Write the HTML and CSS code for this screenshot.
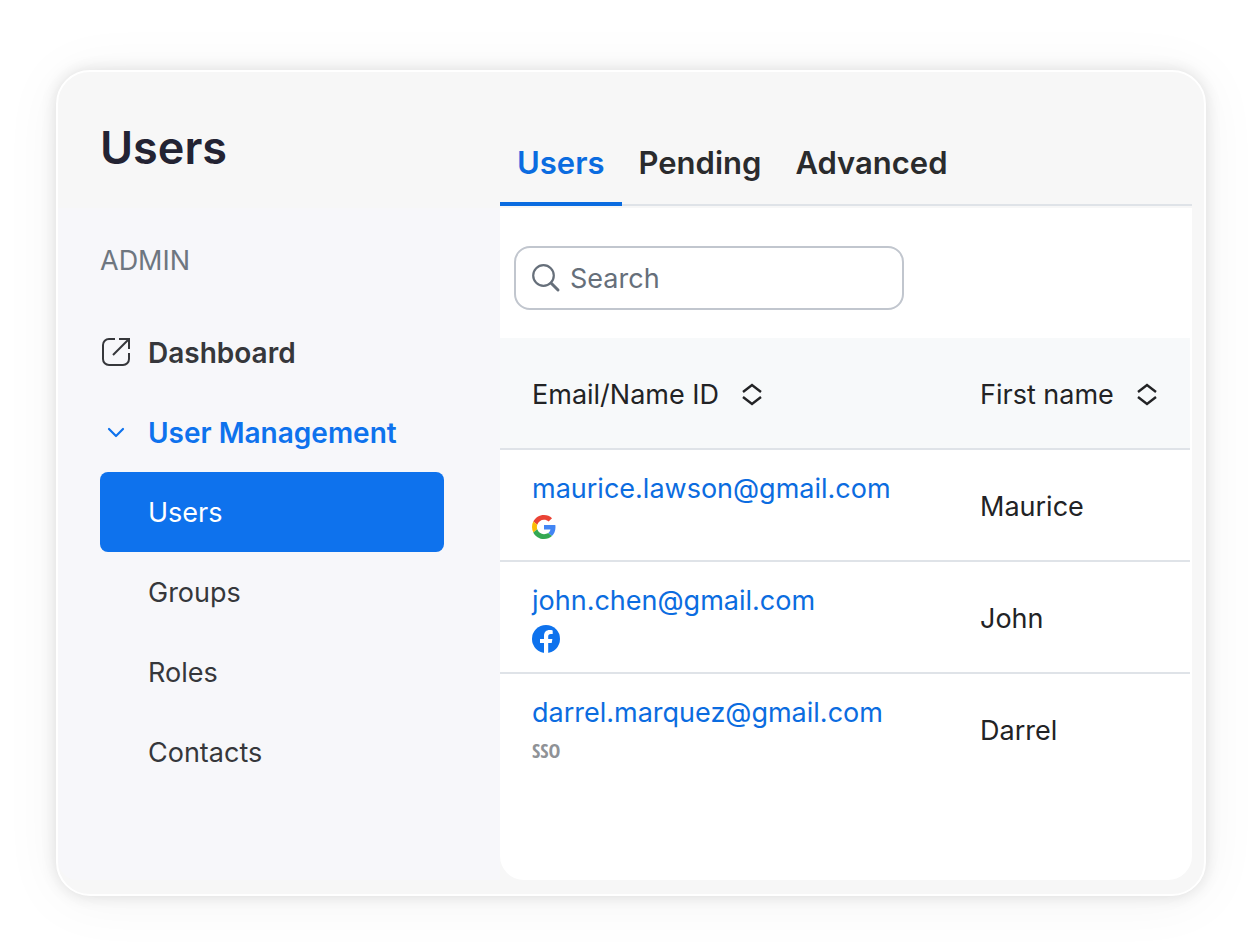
FILE: index.html
```html
<!DOCTYPE html>
<html lang="en">
<head>
  <meta charset="UTF-8">
  <meta name="viewport" content="width=device-width, initial-scale=1.0">
  <title>Users</title>
  <link rel="stylesheet" href="styles.css">
</head>
<body>
  <div class="card">
    <!-- Sidebar -->
    <aside class="sidebar">
      <h1>Users</h1>
      <nav class="nav">
        <h2>ADMIN</h2>
        <a class="nav-item strong" href="#">
          <svg width="32" height="32" viewBox="0 0 32 32" fill="none" stroke="currentColor" stroke-width="2">
            <path d="M15 3H9a6 6 0 0 0-6 6v14a6 6 0 0 0 6 6h14a6 6 0 0 0 6-6v-6M19 3h10v10M29 3L13 19"/>
          </svg>
          <span>Dashboard</span>
        </a>
        <a class="nav-item strong open" href="#">
          <svg width="32" height="32" viewBox="0 0 32 32" fill="none" stroke="currentColor" stroke-width="2.200" stroke-linecap="round" stroke-linejoin="round">
            <path d="M9 13l7 7 7-7"/>
          </svg>
          <span>User Management</span>
        </a>
        <a class="nav-item sub active" href="#"><span>Users</span></a>
        <a class="nav-item sub" href="#"><span>Groups</span></a>
        <a class="nav-item sub" href="#"><span>Roles</span></a>
        <a class="nav-item sub" href="#"><span>Contacts</span></a>
      </nav>
    </aside>

    <!-- Content -->
    <main class="main">
      <div class="tabs">
        <button class="tab active">Users</button>
        <button class="tab">Pending</button>
        <button class="tab">Advanced</button>
      </div>
      <div class="panel">
        <label class="search">
          <svg width="32" height="32" viewBox="0 0 32 32" fill="none" stroke="currentColor" stroke-linecap="round">
            <circle cx="13.500" cy="13.500" r="10.300" stroke-width="2.200"/>
            <path d="M21 21l7 7" stroke-width="3"/>
          </svg>
          <input type="text" placeholder="Search" aria-label="Search">
        </label>
        <table>
          <thead>
            <tr>
              <th class="col-email">
                <button class="sort">
                  Email/Name ID
                  <svg width="20" height="24" viewBox="0 0 20 24" fill="none" stroke="currentColor" stroke-width="2.400">
                    <path d="M1 9l9-7 9 7M1 14l9 7 9-7"/>
                  </svg>
                </button>
              </th>
              <th>
                <button class="sort">
                  First name
                  <svg width="20" height="24" viewBox="0 0 20 24" fill="none" stroke="currentColor" stroke-width="2.400">
                    <path d="M1 9l9-7 9 7M1 14l9 7 9-7"/>
                  </svg>
                </button>
              </th>
            </tr>
          </thead>
          <tbody>
            <tr>
              <td>
                <div class="account">
                  <a href="#">maurice.lawson@gmail.com</a>
                  <svg width="24" height="28" viewBox="0 0 48 48">
                    <path fill="#EA4335" d="M24 9.5c3.54 0 6.71 1.22 9.21 3.6l6.85-6.85C35.9 2.38 30.47 0 24 0 14.62 0 6.51 5.38 2.56 13.22l7.98 6.19C12.43 13.72 17.74 9.5 24 9.5z"/>
                    <path fill="#4285F4" d="M46.98 24.55c0-1.57-.15-3.09-.38-4.55H24v9.02h12.94c-.58 2.96-2.26 5.48-4.78 7.18l7.73 6c4.51-4.18 7.09-10.36 7.09-17.65z"/>
                    <path fill="#FBBC05" d="M10.53 28.59c-.48-1.45-.76-2.99-.76-4.59s.27-3.14.76-4.59l-7.98-6.19C.92 16.46 0 20.12 0 24c0 3.88.92 7.54 2.56 10.78l7.97-6.19z"/>
                    <path fill="#34A853" d="M24 48c6.48 0 11.93-2.13 15.89-5.81l-7.73-6c-2.15 1.45-4.92 2.3-8.16 2.3-6.26 0-11.57-4.22-13.47-9.91l-7.98 6.19C6.51 42.62 14.62 48 24 48z"/>
                  </svg>
                </div>
              </td>
              <td>Maurice</td>
            </tr>
            <tr>
              <td>
                <div class="account">
                  <a href="#">john.chen@gmail.com</a>
                  <svg width="28" height="28" viewBox="0 0 28 28">
                    <circle cx="14" cy="14" r="14" fill="#0E72ED"/>
                    <path fill="#fff" d="M12 28V18H8v-4h4v-3c0-3.800 2.200-5.900 5.600-5.900 1.200 0 2.200.1 3.100.3v3.500h-1.900c-1.900 0-2.600 1-2.600 2.500V14h4.200l-.7 4h-3.500v10z"/>
                  </svg>
                </div>
              </td>
              <td>John</td>
            </tr>
            <tr>
              <td>
                <div class="account">
                  <a href="#">darrel.marquez@gmail.com</a>
                  <span class="sso">SSO</span>
                </div>
              </td>
              <td>Darrel</td>
            </tr>
          </tbody>
        </table>
      </div>
    </main>
  </div>
</body>
</html>
```

FILE: styles.css
```css
* {
  box-sizing: border-box;
}
body {
  margin: 0;
  min-height: 100vh;
  padding: 70px 53px 49px 56px;
  display: flex;
  background: #fff;
  color: #222325;
  font-family: Inter, "Liberation Sans", sans-serif;
  font-size: 27px;
  line-height: 32px;
}
a {
  color: inherit;
  text-decoration: none;
}
button {
  border: none;
  background: none;
  padding: 0;
  color: inherit;
  font: inherit;
  cursor: pointer;
}
.card {
  flex: 1;
  display: grid;
  grid-template-columns: 442px 1fr;
  padding-right: 12px;
  padding-bottom: 14px;
  background: #f7f7f7;
  border: 2px solid #fff;
  border-radius: 34px;
  box-shadow: 0 0 16px rgba(0, 0, 0, 0.12), 0 4px 60px rgba(0, 0, 0, 0.05);
}

/* Sidebar */
.sidebar {
  display: flex;
  flex-direction: column;
}
.sidebar h1 {
  margin: 0;
  height: 136px;
  padding: 48px 0 0 42px;
  color: #232333;
  font-size: 45px;
  font-weight: 600;
  line-height: 56px;
}
.nav {
  flex: 1;
  display: flex;
  flex-direction: column;
  padding: 37px 56px 0 42px;
  background: #f7f7fa;
  border-bottom-left-radius: 20px;
}
.nav h2 {
  margin: 0 0 35px;
  color: #6e7680;
  font-size: 27px;
  font-weight: 400;
}
.nav-item {
  display: flex;
  align-items: center;
  gap: 16px;
  height: 80px;
  color: #36373b;
}
.nav-item span {
  padding-top: 2px;
}
.nav-item.strong {
  font-size: 28px;
  font-weight: 600;
}
.nav-item.open {
  color: #0e72ed;
}
.nav-item.sub {
  padding-left: 48px;
  border-radius: 8px;
}
.nav-item.active {
  background: #0e72ed;
  color: #fff;
}

/* Content */
.main {
  display: flex;
  flex-direction: column;
}
.tabs {
  display: flex;
  height: 134px;
  border-bottom: 2px solid #dfe3e8;
}
.tab {
  height: 134px;
  padding: 52px 17px 0;
  border-bottom: 4px solid transparent;
  color: #2a2b2d;
  font-size: 31px;
  font-weight: 600;
}
.tab.active {
  border-color: #0b6ce0;
  color: #0b6ce0;
}
.panel {
  flex: 1;
  margin-top: 2px;
  padding: 38px 2px 0 0;
  background: #fff;
  border-radius: 0 0 24px 24px;
}
.search {
  display: flex;
  align-items: center;
  gap: 8px;
  width: 390px;
  height: 64px;
  margin: 0 0 28px 14px;
  padding: 0 14px;
  border: 2px solid #c1c6ce;
  border-radius: 16px;
  color: #666f7a;
}
.search input {
  flex: 1;
  min-width: 0;
  padding: 2px 0 0;
  border: none;
  outline: none;
  background: none;
  color: inherit;
  font: inherit;
}
.search input::placeholder {
  color: inherit;
  opacity: 1;
}
table {
  width: 100%;
  border-collapse: separate;
  border-spacing: 0;
}
th, td {
  height: 112px;
  padding: 4px 0 0 32px;
  border-bottom: 2px solid #dfe3e8;
  text-align: left;
}
th {
  background: #f7f9fa;
  font-weight: 400;
}
tbody tr:last-child td {
  border-color: transparent;
}
.col-email {
  width: 448px;
}
.sort {
  display: flex;
  align-items: center;
  gap: 23px;
}
.account {
  display: flex;
  flex-direction: column;
  align-items: flex-start;
  gap: 10px;
  padding-top: 2px;
}
.account a {
  line-height: 28px;
  color: #0b6ce0;
}
.sso {
  color: #8f9296;
  font-family: "Open Sans Condensed", "Liberation Sans Narrow", "Open Sans", sans-serif;
  font-size: 20px;
  font-weight: 700;
  line-height: 28px;
}
```
